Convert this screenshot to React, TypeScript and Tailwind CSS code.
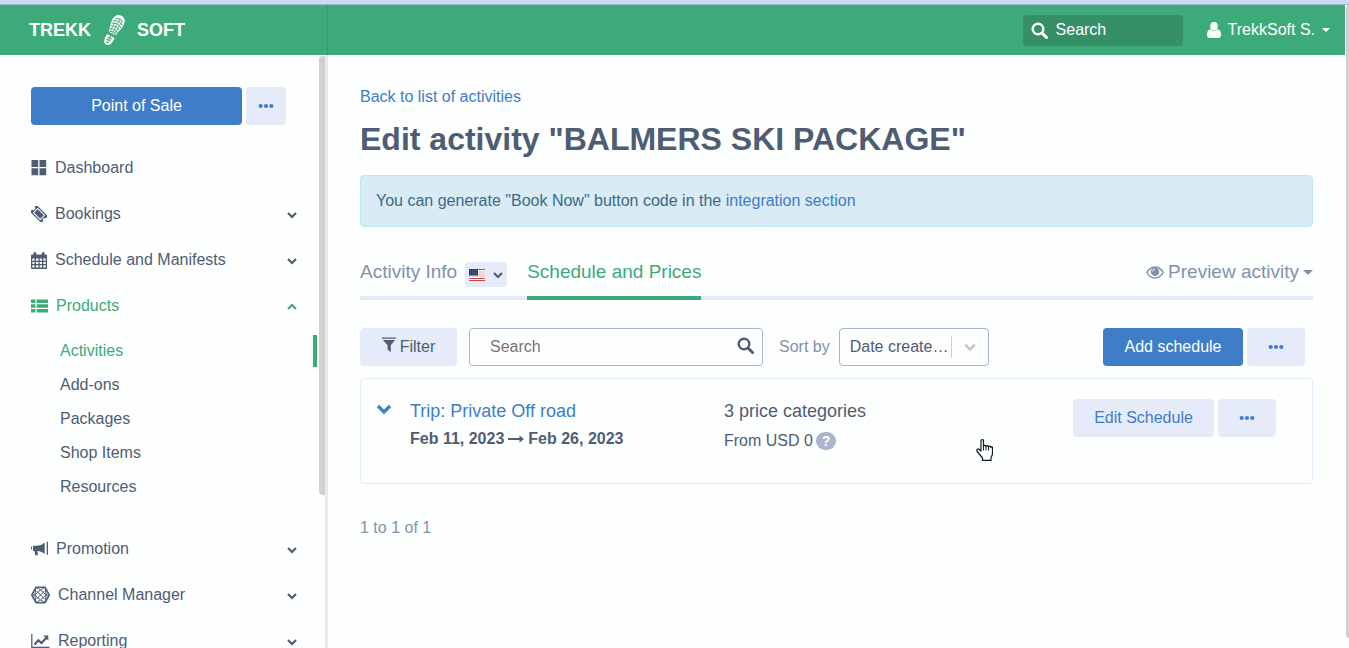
import clsx from 'clsx';
import { ReactNode } from 'react';

const SearchIcon = ({ className }: { className?: string }) => (
  <svg viewBox="0 0 17 17" className={className} fill="none" stroke="currentColor">
    <circle cx="7" cy="7" r="5.3" strokeWidth="2.4" />
    <path d="M11 11l4.5 4.5" strokeWidth="3" strokeLinecap="round" />
  </svg>
);

const Chevron = ({ className, up }: { className?: string; up?: boolean }) => (
  <svg viewBox="0 0 10 8" className={className} fill="none" stroke="currentColor" strokeWidth="2.2">
    <path d={up ? 'M1 6l4-4 4 4' : 'M1 2l4 4 4-4'} />
  </svg>
);

const Dots = () => (
  <svg viewBox="0 0 16 6" className="h-1.5 w-4" fill="currentColor">
    <circle cx="2.7" cy="3" r="2.1" />
    <circle cx="8" cy="3" r="2.1" />
    <circle cx="13.3" cy="3" r="2.1" />
  </svg>
);

const BootPrint = () => (
  <svg viewBox="0 0 22 30" className="h-[30px] w-[22px]">
    <g transform="rotate(28 11 15)">
      <path
        fill="#fff"
        d="M11-1c4.200 0 6.200 3.400 6.200 7.800 0 4.700-1.800 8-2.200 12.200H7C6.600 14.800 4.600 11.500 4.600 6.800 4.600 2.400 6.800-1 11-1z"
      />
      <path fill="#fff" d="M6.800 21.800h8.400c.6 5.700-.7 9.700-4.200 9.700s-4.800-4-4.200-9.700z" />
      <g stroke="#3daa7a" strokeWidth="0.9" fill="none">
        <path d="M7 4l4-1.500L15 4M5.500 7L11 5l5.500 2M5.500 10L11 8l5.500 2M6 13l5-2 5 2M6.500 16l4.500-2 4.500 2M7.500 18.500l3.500-1.700 3.500 1.700" />
        <path d="M11 2.500V19M8 4.500l.5 14.500M14 4.500L13.500 19" strokeWidth="0.700" />
        <path d="M8.500 24.500l2.500-1 2.500 1M8.500 27l2.500-1 2.500 1M9.500 29.200h3M11 22v7" />
      </g>
    </g>
  </svg>
);

const DashboardIcon = () => (
  <svg viewBox="0 0 16 16" className="size-4" fill="currentColor">
    <path d="M.5 0h6.700v7H.5zM8.500 0h6.700v7H8.500zM.5 8.300h6.700v7H.5zM8.500 8.300h6.700v7H8.500z" />
  </svg>
);

const TicketIcon = () => (
  <svg viewBox="0 0 16 16" className="size-4">
    <g transform="rotate(45 8 8)">
      <path
        fill="currentColor"
        d="M0 3.300h16v2.900a1.800 1.800 0 0 0 0 3.600v2.900H0V9.800a1.800 1.800 0 0 0 0-3.600z"
      />
      <path fill="none" stroke="#fdfefe" strokeWidth="1" d="M3.200 5h9.600v6H3.200z" />
    </g>
  </svg>
);

const CalendarIcon = () => (
  <svg viewBox="0 0 16 17" className="h-[17px] w-4">
    <path
      fill="currentColor"
      d="M0 3.500q0-1 1-1h1.500V1.200q0-1.200 1.300-1.200T5.200 1.200v1.300h5.600V1.200q0-1.200 1.300-1.200t1.400 1.200v1.300H15q1 0 1 1V16q0 1-1 1H1q-1 0-1-1z"
    />
    <g fill="#fdfefe">
      <path d="M1.300 6.500h2.300v2.200H1.300zM5 6.500h2.400v2.200H5zM8.700 6.500H11v2.200H8.700zM12.400 6.500h2.300v2.200h-2.300z" />
      <path d="M1.300 9.900h2.300v2.200H1.300zM5 9.900h2.400v2.200H5zM8.700 9.900H11v2.200H8.700zM12.400 9.900h2.300v2.200h-2.300z" />
      <path d="M1.300 13.300h2.300v2.200H1.300zM5 13.300h2.400v2.200H5zM8.700 13.300H11v2.200H8.700zM12.400 13.300h2.300v2.200h-2.300z" />
    </g>
  </svg>
);

const ListIcon = () => (
  <svg viewBox="0 0 17 14" className="h-3.5 w-[17px]" fill="currentColor">
    <path d="M0 .5h4.500v3.600H0zM5.700.5H17v3.600H5.700zM0 5.200h4.500v3.600H0zM5.700 5.200H17v3.600H5.700zM0 9.900h4.500v3.600H0zM5.700 9.900H17v3.600H5.700z" />
  </svg>
);

const MegaphoneIcon = () => (
  <svg viewBox="0 0 17 16" className="h-4 w-[17px]" fill="currentColor">
    <path d="M0 5.800h1v2.600H0zM2 4.800h3.300c3.500 0 6.200-1.300 8.400-3.300v11.400c-2-1.700-4.300-2.700-7.300-2.900l.6 4.200H4.300L3.400 10H2zM15.700.7H17v13h-1.300z" />
  </svg>
);

const ChannelIcon = () => (
  <svg viewBox="0 0 19 18" className="h-[18px] w-[19px]" fill="none" stroke="currentColor" strokeWidth="1">
    <path strokeWidth="1.600" d="M5 1.300h9L18.200 9 14 16.700H5L.8 9z" />
    <path d="M5 1.300L3.800 9 5 16.700 9.500 14l4.500 2.700L15.200 9 14 1.300 9.500 4z" />
    <path d="M9.500 4L3.800 9l5.700 5 5.700-5zM.8 9h3M15.200 9h3M5.500 5l8 8M13.500 5l-8 8" />
  </svg>
);

const ChartIcon = () => (
  <svg viewBox="0 0 19 16" className="h-4 w-[19px]" fill="none" stroke="currentColor">
    <path d="M.8 1v13.500H18.500" strokeWidth="1.300" />
    <path d="M3.500 11.500l4-4.200 3 2.700 5-5.200" strokeWidth="2.300" />
    <path d="M12.300 2.500h5v5z" fill="currentColor" stroke="none" />
  </svg>
);

const FilterIcon = () => (
  <svg viewBox="0 0 14 16" className="mb-1 h-4 w-3.5" fill="currentColor">
    <path d="M0 .5h14v1.200H0zM1 3h12L8.800 8.200v7L5.600 12.600V8.200z" />
  </svg>
);

const EyeIcon = () => (
  <svg viewBox="0 0 18 13" className="h-[13px] w-[18px]" fill="none" stroke="currentColor">
    <path d="M.8 6.500C2.800 3 5.700 1 9 1s6.200 2 8.200 5.500C15.200 10 12.300 12 9 12S2.800 10 .8 6.500z" strokeWidth="1.500" />
    <circle cx="9" cy="5.800" r="4.300" fill="currentColor" stroke="none" />
    <path d="M6.800 5.500A2.200 2.200 0 0 1 9 3.300" stroke="#fdfefe" strokeWidth="0.900" />
  </svg>
);

const FlagIcon = () => (
  <svg viewBox="0 0 16 12" className="h-3 w-4">
    <rect width="16" height="12" fill="#f3d3d4" />
    <path d="M0 .5h16M0 9.500h16M0 11.500h16" stroke="#c8434c" />
    <path d="M0 1.500h16M0 8.500h16M0 10.500h16" stroke="#fff" />
    <rect width="9" height="6.500" fill="#2c3f72" />
    <path d="M1 1.500h7M1 3.300h7M1 5.100h7" stroke="#6c78a3" strokeWidth="0.600" strokeDasharray="1 1" />
  </svg>
);

const HandCursor = () => (
  <svg
    viewBox="0 0 17 22"
    className="pointer-events-none absolute left-[976px] top-[439px] h-[22px] w-[17px]"
    fill="#fff"
    stroke="#111827"
    strokeWidth="1.200"
    strokeLinejoin="round"
  >
    <path d="M5 12V2q0-1.400 1.300-1.400T7.500 2v5.500q0-1.200 1.200-1.200t1.300 1.500q0-1.300 1.300-1.200t1.200 1.500q.1-1.100 1.200-1t1.300 1.500q.1-.9.800-.8t.7 1V14q0 2.500-1.500 4.500v2.900H6.500v-2.400L1.200 12.500q-1-1.600.2-2.300t2.200.5z" />
    <path d="M7.500 7.500v4M10 7.800v3.700M12.500 8.100v3.400" strokeWidth="1" />
  </svg>
);

const NavItem = ({
  icon,
  label,
  active,
  expandable = true,
}: {
  icon: ReactNode;
  label: string;
  active?: boolean;
  expandable?: boolean;
}) => (
  <a
    href="#"
    className={clsx('flex h-[46px] items-center gap-2 pl-[31px] pr-7', active && 'text-[#3daa7a]')}
  >
    {icon}
    <span className="flex-1">{label}</span>
    {expandable && <Chevron up={active} className="mt-0.5 h-2 w-2.5" />}
  </a>
);

const subItems = ['Activities', 'Add-ons', 'Packages', 'Shop Items', 'Resources'];

const Sidebar = () => (
  <aside className="relative w-[328px] shrink-0 overflow-hidden border-r-[3px] border-[#e7eaf1]">
    <div className="flex gap-1 pb-5 pl-[31px] pr-[39px] pt-8">
      <button className="h-[38px] flex-1 rounded bg-[#3f7dc8] text-white">Point of Sale</button>
      <button
        aria-label="More sale options"
        className="flex h-[38px] w-10 items-center justify-center rounded bg-[#e5ebf8] text-[#3f7dc8]"
      >
        <Dots />
      </button>
    </div>
    <nav>
      <NavItem icon={<DashboardIcon />} label="Dashboard" expandable={false} />
      <NavItem icon={<TicketIcon />} label="Bookings" />
      <NavItem icon={<CalendarIcon />} label="Schedule and Manifests" />
      <NavItem icon={<ListIcon />} label="Products" active />
      <ul className="pb-[22px] pr-2 pt-[5px]">
        {subItems.map((item, i) => (
          <li key={item} className="py-px">
            <a
              href="#"
              className={clsx(
                'flex h-8 items-center border-r-4 pl-[60px]',
                i === 0 ? 'border-[#3daa7a] text-[#3daa7a]' : 'border-transparent',
              )}
            >
              {item}
            </a>
          </li>
        ))}
      </ul>
      <NavItem icon={<MegaphoneIcon />} label="Promotion" />
      <NavItem icon={<ChannelIcon />} label="Channel Manager" />
      <NavItem icon={<ChartIcon />} label="Reporting" />
    </nav>
    <div className="absolute -right-0.5 top-px h-[439px] w-2 rounded-full bg-[#d1d1d1]" />
  </aside>
);

const Header = () => (
  <header className="flex h-[50px] shrink-0 bg-[#3daa7a] text-white">
    <div className="flex w-[328px] items-center border-r border-[#359a6d] pl-[29px]">
      <a href="#" className="flex items-center gap-3 text-[18px] font-bold">
        <span>TREKK</span>
        <BootPrint />
        <span>SOFT</span>
      </a>
    </div>
    <div className="flex flex-1 items-center justify-end gap-6 pr-[15px]">
      <label className="flex h-[31px] w-40 items-center gap-2 rounded bg-[#359068] px-2">
        <SearchIcon className="size-[17px] shrink-0" />
        <input
          aria-label="Search"
          placeholder="Search"
          className="w-full bg-transparent outline-none placeholder:text-white"
        />
      </label>
      <button className="flex items-center gap-[7px]">
        <svg viewBox="0 0 14 16" className="h-4 w-3.5" fill="currentColor">
          <ellipse cx="7" cy="4.300" rx="3.800" ry="4.300" />
          <path d="M3 7.300Q7 10.600 11 7.300q3 .8 3 5.700 0 3-2.500 3h-9Q0 16 0 13q0-4.900 3-5.700z" />
        </svg>
        <span>TrekkSoft S.</span>
        <svg viewBox="0 0 8 4" className="h-1 w-2" fill="currentColor">
          <path d="M0 0h8L4 4z" />
        </svg>
      </button>
    </div>
  </header>
);

const Tabs = () => (
  <div className="mt-7 flex h-[45px] items-stretch border-b-4 border-[#e5ebf8] text-[19px] text-[#8292ab]">
    <div className="flex items-start gap-2">
      <a href="#" className="leading-[34px]">
        Activity Info
      </a>
      <button
        aria-label="Language"
        className="mt-[7px] flex h-[25px] w-[42px] items-center justify-center gap-2 rounded-sm bg-[#e5ebf8] text-[#4f5d73]"
      >
        <FlagIcon />
        <Chevron className="h-2 w-2.5" />
      </button>
    </div>
    <a href="#" className="-mb-1 ml-5 border-b-4 border-[#3daa7a] leading-[34px] text-[#3daa7a]">
      Schedule and Prices
    </a>
    <button className="ml-auto flex h-[34px] items-center gap-1">
      <EyeIcon />
      <span>Preview activity</span>
      <svg viewBox="0 0 10 5" className="h-[5px] w-2.5" fill="currentColor">
        <path d="M0 0h10L5 5z" />
      </svg>
    </button>
  </div>
);

const Toolbar = () => (
  <div className="mt-7 flex h-[38px] items-center pr-2">
    <button className="flex h-full w-[97px] items-center justify-center gap-1 rounded bg-[#e5ebf8]">
      <FilterIcon />
      Filter
    </button>
    <label className="ml-3 flex h-full w-[294px] items-center rounded border border-[#aab4cb] pl-5 pr-2">
      <input
        aria-label="Search schedules"
        placeholder="Search"
        className="w-full bg-transparent outline-none placeholder:text-[#757575]"
      />
      <SearchIcon className="mb-1 size-[17px] shrink-0" />
    </label>
    <label htmlFor="sort" className="ml-4 text-[#8292ab]">
      Sort by
    </label>
    <div className="relative ml-[9px] h-full w-[150px]">
      <select
        id="sort"
        className="h-full w-full appearance-none rounded border border-[#aab4cb] bg-transparent pl-2.5 pr-10 outline-none"
      >
        <option>Date create…</option>
      </select>
      <span className="pointer-events-none absolute inset-y-2 right-0 flex w-[38px] items-center justify-center border-l border-[#cccccc] text-[#c4c6cb]">
        <Chevron className="h-2.5 w-3" />
      </span>
    </div>
    <button className="ml-auto h-full w-[140px] rounded bg-[#3f7dc8] text-white">Add schedule</button>
    <button
      aria-label="More schedule actions"
      className="ml-1 flex h-full w-[58px] items-center justify-center rounded bg-[#e5ebf8] text-[#3f7dc8]"
    >
      <Dots />
    </button>
  </div>
);

const ScheduleCard = () => (
  <section className="mt-3 flex h-[106px] rounded border border-[#e5ebf8] pl-[15px] pr-9 pt-5">
    <button aria-label="Expand" className="mt-1 h-3 text-[#3f7dc8]">
      <Chevron className="h-3 w-4" />
    </button>
    <div className="ml-[18px] w-[314px]">
      <a href="#" className="block text-[18px] leading-6 text-[#3f7dc8]">
        Trip: Private Off road
      </a>
      <p className="flex items-center gap-1 pt-1 text-[16px] font-bold leading-6">
        <span>Feb 11, 2023</span>
        <svg viewBox="0 0 16 8" className="h-2 w-4" fill="currentColor">
          <path d="M0 3h11.500V.6L16 4l-4.500 3.400V5H0z" />
        </svg>
        <span>Feb 26, 2023</span>
      </p>
    </div>
    <div>
      <p className="text-[18px] leading-6">3 price categories</p>
      <p className="flex items-center gap-[3px] pt-1.5 leading-6">
        From USD 0
        <span className="flex h-[18px] w-5 items-center justify-center rounded-full bg-[#aab4cb] text-sm font-bold text-white">
          ?
        </span>
      </p>
    </div>
    <div className="ml-auto flex h-[38px] gap-1">
      <button className="w-[141px] rounded bg-[#e5ebf8] text-[#3f7dc8]">Edit Schedule</button>
      <button
        aria-label="More actions"
        className="flex w-[58px] items-center justify-center rounded bg-[#e5ebf8] text-[#3f7dc8]"
      >
        <Dots />
      </button>
    </div>
  </section>
);

const App = () => {
  return (
    <div className="relative flex h-screen flex-col overflow-hidden bg-[#fdfefe] font-['Liberation_Sans',Arial,sans-serif] text-[16px] leading-6 text-[#4f5d73]">
      <div className="h-[5px] shrink-0 border-b border-[#a9b4cf] bg-[#c9daf5]" />
      <div className="flex min-h-0 flex-1">
        <div className="flex min-w-0 flex-1 flex-col">
          <Header />
          <div className="flex min-h-0 flex-1">
            <Sidebar />
            <main className="min-w-0 flex-1 px-8 pt-[30px]">
              <a href="#" className="text-[#3f7dc8]">
                Back to list of activities
              </a>
              <h1 className="mt-2 text-[32px] font-bold leading-[44px]">
                Edit activity "BALMERS SKI PACKAGE"
              </h1>
              <div className="mt-3.5 rounded border border-[#bce8f1] bg-[#d9ebf4] px-[15px] py-[13px] text-[#3a6a8a]">
                You can generate "Book Now" button code in the{' '}
                <a href="#" className="text-[#3f7dc8]">
                  integration section
                </a>
              </div>
              <Tabs />
              <Toolbar />
              <ScheduleCard />
              <p className="mt-8 text-[#8292ab]">1 to 1 of 1</p>
            </main>
          </div>
        </div>
        <div className="w-1 shrink-0 pb-2.5 pl-px">
          <div className="h-full rounded-l-full bg-[#d1d1d1]" />
        </div>
      </div>
      <HandCursor />
    </div>
  );
};

export default App;
